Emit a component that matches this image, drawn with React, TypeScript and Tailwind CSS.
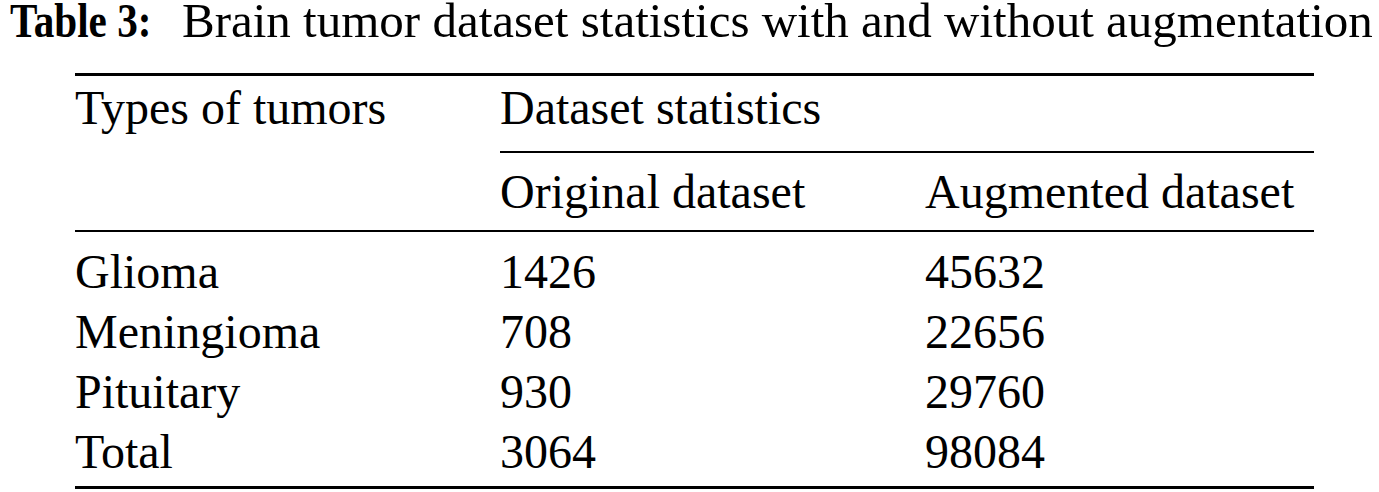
import React from "react";

const rows: [string, string, string][] = [
  ["Glioma", "1426", "45632"],
  ["Meningioma", "708", "22656"],
  ["Pituitary", "930", "29760"],
  ["Total", "3064", "98084"],
];

export default function App() {
  return (
    <div
      className="w-[1379px] h-[492px] bg-white text-black overflow-hidden"
      style={{ fontFamily: '"Liberation Serif", "Times New Roman", serif' }}
    >
      <div className="flex items-start pl-[10px] pt-[1px] h-[41px] text-[49px] leading-[40px] whitespace-nowrap">
        <span className="inline-block w-[172px] font-bold">
          <span className="inline-block origin-left scale-x-[0.84]">Table 3:</span>
        </span>
        <span>Brain tumor dataset statistics with and without augmentation</span>
      </div>

      <div className="ml-[75px] mt-[32px] w-[1239px] text-[48px] whitespace-nowrap">
        <div className="h-[3px] bg-black" />
        <div className="grid grid-cols-[425px_1fr] leading-[57px]">
          <div className="pt-[3px]">Types of tumors</div>
          <div className="flex flex-col">
            <div className="pt-[3px] pb-[15px]">Dataset statistics</div>
            <div className="h-[2px] bg-black" />
            <div className="grid grid-cols-[425px_1fr] pt-[10px] pb-[10px]">
              <div>Original dataset</div>
              <div>Augmented dataset</div>
            </div>
          </div>
        </div>
        <div className="h-[2px] bg-black" />
        <div className="pt-[10px] pb-[4px] leading-[60px]">
          {rows.map(([a, b, c]) => (
            <div key={a} className="grid grid-cols-[425px_425px_1fr]">
              <div>{a}</div>
              <div>{b}</div>
              <div>{c}</div>
            </div>
          ))}
        </div>
        <div className="h-[3px] bg-black" />
      </div>
    </div>
  );
}
